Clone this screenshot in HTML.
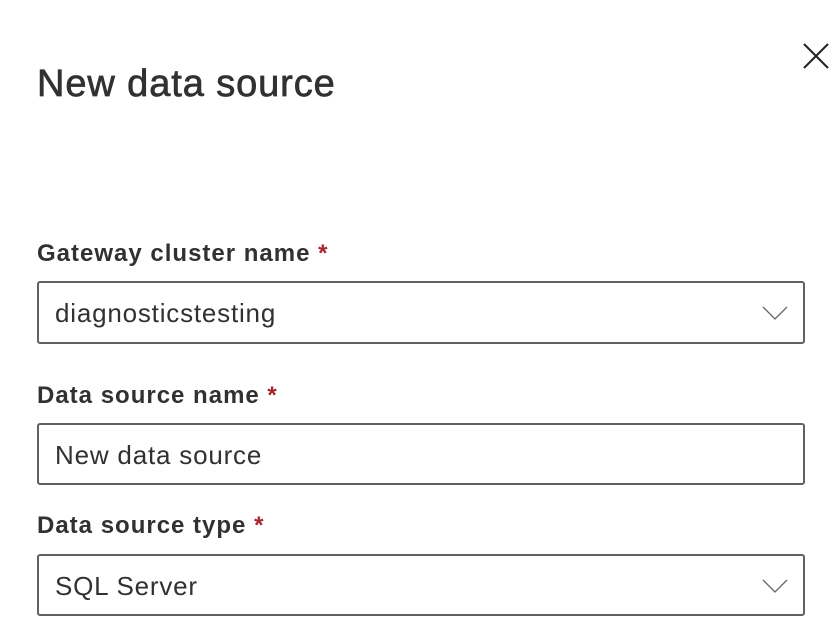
<!DOCTYPE html>
<html><head><style>
body{margin:0;width:840px;height:642px;background:#fff;font-family:"Liberation Sans",sans-serif;color:#323130;position:relative;overflow:hidden}
.t{position:absolute;left:37px;top:63px;font-size:38px;font-weight:normal;letter-spacing:0.9px;color:#323130;-webkit-text-stroke:0.7px #323130}
.l{position:absolute;left:37px;font-size:24px;font-weight:bold;color:#323130;letter-spacing:1px}
.l span{color:#a4262c}
.b{position:absolute;left:37px;width:764px;border:2px solid #616161;border-radius:3px;box-sizing:content-box}
.b div{position:absolute;left:16px;font-size:26px;color:#323130;letter-spacing:0.8px}
.c{position:absolute;right:15px;top:23px}
</style></head><body>
<svg style="position:absolute;left:803px;top:43px" width="26" height="26"><path d="M1 1L25 25M25 1L1 25" stroke="#222" stroke-width="2"/></svg>
<div class="t">New data source</div>
<div class="l" style="top:240px">Gateway cluster name <span>*</span></div>
<div class="b" style="top:281px;height:59px"><div style="top:15px">diagnosticstesting</div><svg class="c" width="26" height="14"><path d="M1 1L13 13L25 1" fill="none" stroke="#666" stroke-width="1.3"/></svg></div>
<div class="l" style="top:382px">Data source name <span>*</span></div>
<div class="b" style="top:423px;height:58px"><div style="top:15px">New data source</div></div>
<div class="l" style="top:512px">Data source type <span>*</span></div>
<div class="b" style="top:554px;height:58px"><div style="top:15px">SQL Server</div><svg class="c" width="26" height="14"><path d="M1 1L13 13L25 1" fill="none" stroke="#666" stroke-width="1.3"/></svg></div>
</body></html>
